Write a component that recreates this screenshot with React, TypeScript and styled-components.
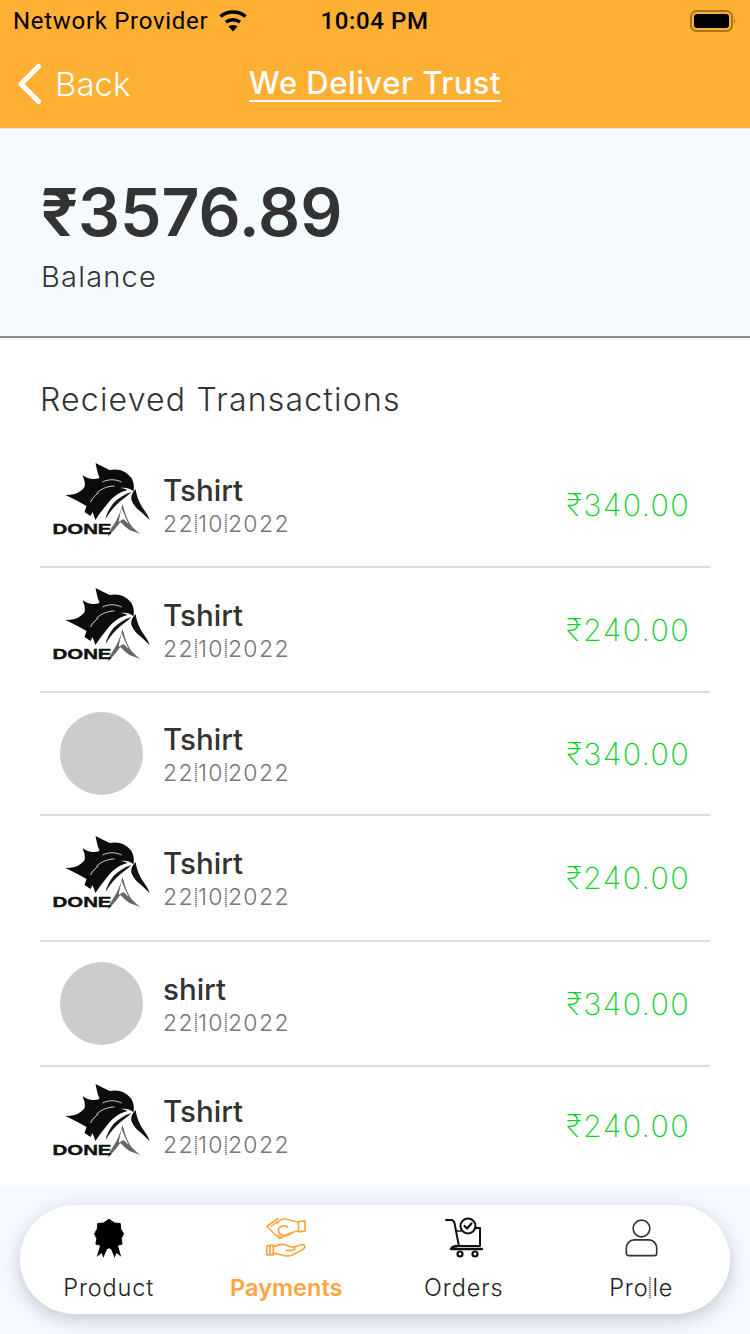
import React from "react";
import styled, { createGlobalStyle } from "styled-components";

const Global = createGlobalStyle`
  html, body { margin: 0; padding: 0; background: #fff; }
  body { font-family: Inter, "Noto Sans", sans-serif; color: #333; }
  * { box-sizing: border-box; }
`;

const Page = styled.div`
  width: 750px;
  height: 1334px;
  display: flex;
  flex-direction: column;
  overflow: hidden;
  background: #fff;
`;

const Header = styled.header`
  height: 129px;
  flex: none;
  background: #fdb033;
  border-bottom: 1px solid #e2e2e2;
`;

const StatusBar = styled.div`
  height: 42px;
  padding: 0 14px 0 13px;
  display: grid;
  grid-template-columns: 1fr auto 1fr;
  align-items: center;
  color: #000;
`;

const Carrier = styled.div`
  display: flex;
  align-items: center;
  gap: 10px;
  font-family: Roboto, sans-serif;
  font-size: 24px;
  letter-spacing: 0.7px;
`;

const Clock = styled.div`
  font-family: Roboto, sans-serif;
  font-size: 24px;
  font-weight: 500;
  letter-spacing: 0.6px;
`;

const BatterySlot = styled.div`
  display: flex;
  justify-content: flex-end;
`;

const NavBar = styled.nav`
  height: 86px;
  padding: 0 0 0 17px;
  display: grid;
  grid-template-columns: 1fr auto 1fr;
  align-items: center;
  color: #fff;
`;

const BackLink = styled.div`
  display: flex;
  align-items: center;
  gap: 13px;
  font-size: 33px;
  font-weight: 300;
  margin-top: -3px;
`;

const Title = styled.div`
  font-size: 31px;
  font-weight: 500;
  line-height: 34px;
  letter-spacing: 0.5px;
  border-bottom: 2px solid #fff;
  margin-left: -17px;
  margin-top: -2px;
`;

const BalancePanel = styled.section`
  height: 209px;
  flex: none;
  background: #f5faff;
  border-bottom: 2px solid #8f8f8f;
  padding: 47px 41px 0;
`;

const Amount = styled.div`
  font-size: 66px;
  line-height: 72px;
  font-weight: 600;
  color: #333;
  letter-spacing: 0;
`;

const BalanceLabel = styled.div`
  font-size: 29px;
  line-height: 36px;
  font-weight: 300;
  letter-spacing: 1.2px;
  color: #333;
  margin-top: 11px;
`;

const Content = styled.main`
  flex: 1;
  padding: 0 40px;
  display: flex;
  flex-direction: column;
`;

const SectionTitle = styled.h2`
  margin: 0;
  height: 105px;
  padding-top: 43px;
  font-size: 32px;
  line-height: 38px;
  font-weight: 300;
  letter-spacing: 1.2px;
  color: #333;
`;

const Row = styled.div<{ $h: number; $last?: boolean }>`
  height: ${(p) => p.$h}px;
  flex: none;
  display: flex;
  align-items: center;
  border-bottom: ${(p) => (p.$last ? "0" : "2px solid #dcdcdc")};
`;

const Thumb = styled.div`
  width: 123px;
  flex: none;
  display: flex;
  justify-content: center;
`;

const Avatar = styled.div`
  width: 83px;
  height: 83px;
  border-radius: 50%;
  background: #cccccc;
`;

const Info = styled.div`
  flex: 1;
  display: flex;
  flex-direction: column;
  padding-top: 4px;
`;

const Name = styled.div`
  font-size: 29.5px;
  line-height: 34px;
  font-weight: 500;
  color: #333;
`;

const DateLine = styled.div`
  display: flex;
  align-items: center;
  font-size: 23px;
  line-height: 34px;
  font-weight: 300;
  letter-spacing: 1.35px;
  color: #777;
`;

const MissingGlyph = styled.span<{ $h?: number }>`
  display: inline-block;
  width: 2px;
  height: ${(p) => p.$h ?? 19}px;
  margin: 0 1px;
  flex: none;
  background: repeating-linear-gradient(#8a8a8a 0 1px, #d8d8d8 1px 2px);
  vertical-align: middle;
`;

const Price = styled.div`
  padding-right: 20px;
  margin-top: -1px;
  font-size: 30.5px;
  font-weight: 250;
  color: #10d02e;
  letter-spacing: 1.3px;
`;

const Footer = styled.footer`
  height: 149px;
  flex: none;
  background: #f5f9ff;
  padding: 20px 20px;
`;

const TabBar = styled.div`
  height: 109px;
  border-radius: 55px;
  background: #fff;
  box-shadow: 0 5px 18px rgba(60, 70, 90, 0.28);
  display: grid;
  grid-template-columns: repeat(4, 1fr);
`;

const Tab = styled.div<{ $active?: boolean }>`
  display: flex;
  flex-direction: column;
  align-items: center;
  padding-top: 9px;
  color: ${(p) => (p.$active ? "#fda540" : "#222")};
  font-size: 23.5px;
  font-weight: ${(p) => (p.$active ? 600 : 300)};
  letter-spacing: ${(p) => (p.$active ? 0 : 0.85)}px;
`;

const TabIcon = styled.div`
  height: 48px;
  display: flex;
  align-items: center;
  justify-content: center;
`;

const TabLabel = styled.div`
  display: flex;
  align-items: center;
  line-height: 30px;
  margin-top: 11px;
`;

const Wifi = () => (
  <svg width="30" height="22" viewBox="0 0 30 22">
    <path d="M15 21.500l-4.500-5c2.600-2 6.400-2 9 0z" fill="#000" />
    <path d="M8 12.200C12 9 18 9 22 12.200" fill="none" stroke="#000" strokeWidth="3.400" />
    <path d="M2.500 6.500C9.500 0.500 20.500 0.500 27.500 6.500" fill="none" stroke="#000" strokeWidth="3.600" />
  </svg>
);

const Battery = () => (
  <svg width="46" height="24" viewBox="0 0 46 24">
    <rect x="1" y="2" width="41" height="20" rx="5.500" fill="none" stroke="#a87420" strokeWidth="2" />
    <rect x="4" y="5" width="35" height="14" rx="3" fill="#000" />
    <path d="M44 9.500c1.500.5 1.500 4.500 0 5z" fill="#a87420" />
  </svg>
);

const Chevron = () => (
  <svg width="25" height="42" viewBox="0 0 25 42">
    <path d="M21.500 3.500L4 21l17.500 17.500" fill="none" stroke="#fff" strokeWidth="5" strokeLinecap="round" strokeLinejoin="round" />
  </svg>
);

const LogoType = styled.text`
  font-family: "Liberation Sans", sans-serif;
  font-weight: 700;
  font-size: 14px;
  fill: #111;
  stroke: #111;
  stroke-width: 0.4px;
`;

const HorseLogo = () => (
  <svg width="100" height="90" viewBox="1.500 0 100 90">
    <path d="M45 3l14 7c9-2 17 1 22 8 2 4 3 8 2 13-4-3-9-4-13-3 3 0 5 1 7 2-9 2-16 8-21 15-5 6-8 10-11 15l-3-8-2 4-6-4 2-6-9-5-12-6c6 0 11-1 15-4 4-3 5-4 4-10l-2-6c5 4 11 5 17 3-2-5-3-10-4-15z" fill="#0c0c0c" />
    <path d="M52 22c6-3 13-3 19 0M46 33c6-5 12-7 18-7M40 42c2-4 5-7 8-9" fill="none" stroke="#fff" strokeWidth="0.8" />
    <path d="M85 29c1 6 3 12 6 17 3 5 7 9 8 14-4-4-8-8-12-11-3-3-5-6-6-9-1-4 1-8 4-11z" fill="#111" />
    <path d="M81 32c-7 2-13 6-18 11-4 5-7 11-8 16 4-7 9-13 15-18 4-3 8-6 11-9z" fill="#151515" />
    <path d="M72 44c-2 8-5 15-9 21-3 4-5 8-6 12 5-5 10-11 13-15 3 3 6 6 9 8l11 4c-4-3-8-6-11-11-3-5-5-12-7-19z" fill="#666" />
    <path d="M71 48l-3 14 5-3 5 5-4-9z" fill="#fff" />
    <LogoType x="2" y="74" textLength="59" lengthAdjust="spacingAndGlyphs">DONE</LogoType>
  </svg>
);

const Rosette = () => (
  <svg width="30" height="40" viewBox="0 0 32 42">
    <path d="M7 27L3 41l5-4 2 5 5-12zM25 27l4 14-5-4-2 5-5-12z" fill="#000" />
    <path d="M16 1l6 4 6 .5 .5 6 3 5-2.500 5 1 6-6 1.500-4 4-4-1.500-4 1.500-4-4-6-1.500 1-6-2.500-5 3-5 .5-6 6-.5z" fill="#000" strokeLinejoin="round" stroke="#000" strokeWidth="1" />
  </svg>
);

const HandsIcon = () => (
  <svg width="40" height="40" viewBox="0 0 40 40" fill="none" stroke="#fda540" strokeWidth="1.700" strokeLinejoin="round" strokeLinecap="round">
    <path d="M32.500 3.500L39 2.800v10.200l-6.500.8z" />
    <path d="M32.500 4.500C28 3 22 1 18 1c-3 0-5 2-6.500 4" />
    <path d="M32.500 13c-3 .2-5 .5-7.500 2.500-3 2.500-7 2.500-10 1-3-1.500-3.500-5-1.500-7 2-2 6-2 8-.5" />
    <path d="M12 .5L.8 8.500 13.500 20.500 24 15" />
    <path d="M5 8.500l7-5M12 17l4 3" strokeWidth="1.200" />
    <path d="M.8 27.800l6.500-.8v9.800H.8zM4 27.500v9" />
    <path d="M7.300 29c4-1.800 7-3.500 11-2.500 2.500.7 5 2.500 8 2.500 3 0 3.500 3-.5 3.300H20" />
    <path d="M27 29.500l8-2.700c4-1 5 3 2 4.500l-11 6c-4 1.500-8 .5-12-.8l-6.700-1.300" />
  </svg>
);

const CartIcon = () => (
  <svg width="38" height="42" viewBox="0 0 38 42" fill="none" stroke="#111" strokeWidth="2" strokeLinecap="round" strokeLinejoin="round">
    <path d="M1 3h5c2 0 3 1 3.500 3l4 21c.2 1 1 2 2 2" />
    <path d="M30 11h5v18H13" />
    <path d="M11 14h5" strokeWidth="1.500" />
    <path d="M12 29c-3 0-5 1-6 3h31" strokeWidth="2.400" />
    <circle cx="23" cy="9" r="7.500" />
    <path d="M19.500 9l2.500 2.500 4.500-5" strokeWidth="2.200" />
    <circle cx="15" cy="37" r="2.500" strokeWidth="2.200" />
    <circle cx="30" cy="37" r="2.500" strokeWidth="2.200" />
  </svg>
);

const UserIcon = () => (
  <svg width="33" height="38" viewBox="0 0 34 40" fill="none" stroke="#333" strokeWidth="1.700">
    <circle cx="17" cy="10" r="8.800" />
    <path d="M9 22h16c4.500 0 8 4 8 9v5c0 1.500-1 2.500-2.500 2.500h-27C2 38.500 1 37.500 1 36v-5c0-5 3.500-9 8-9z" />
  </svg>
);

type Tx = { name: string; price: string; logo: boolean; h: number };

const txs: Tx[] = [
  { name: "Tshirt", price: "₹340.00", logo: true, h: 125 },
  { name: "Tshirt", price: "₹240.00", logo: true, h: 125 },
  { name: "Tshirt", price: "₹340.00", logo: false, h: 123 },
  { name: "Tshirt", price: "₹240.00", logo: true, h: 126 },
  { name: "shirt", price: "₹340.00", logo: false, h: 125 },
  { name: "Tshirt", price: "₹240.00", logo: true, h: 118 },
];

export default function App() {
  return (
    <Page>
      <Global />
      <Header>
        <StatusBar>
          <Carrier>
            Network Provider
            <Wifi />
          </Carrier>
          <Clock>10:04 PM</Clock>
          <BatterySlot>
            <Battery />
          </BatterySlot>
        </StatusBar>
        <NavBar>
          <BackLink>
            <Chevron />
            Back
          </BackLink>
          <Title>We Deliver Trust</Title>
          <div />
        </NavBar>
      </Header>
      <BalancePanel>
        <Amount>₹3576.89</Amount>
        <BalanceLabel>Balance</BalanceLabel>
      </BalancePanel>
      <Content>
        <SectionTitle>Recieved Transactions</SectionTitle>
        {txs.map((t, i) => (
          <Row key={i} $h={t.h} $last={i === txs.length - 1}>
            <Thumb>{t.logo ? <HorseLogo /> : <Avatar />}</Thumb>
            <Info>
              <Name>{t.name}</Name>
              <DateLine>
                22
                <MissingGlyph />
                10
                <MissingGlyph />
                2022
              </DateLine>
            </Info>
            <Price>{t.price}</Price>
          </Row>
        ))}
      </Content>
      <Footer>
        <TabBar>
          <Tab>
            <TabIcon>
              <Rosette />
            </TabIcon>
            <TabLabel>Product</TabLabel>
          </Tab>
          <Tab $active>
            <TabIcon>
              <HandsIcon />
            </TabIcon>
            <TabLabel>Payments</TabLabel>
          </Tab>
          <Tab>
            <TabIcon>
              <CartIcon />
            </TabIcon>
            <TabLabel>Orders</TabLabel>
          </Tab>
          <Tab>
            <TabIcon>
              <UserIcon />
            </TabIcon>
            <TabLabel>
              Pro
              <MissingGlyph $h={22} />
              le
            </TabLabel>
          </Tab>
        </TabBar>
      </Footer>
    </Page>
  );
}
